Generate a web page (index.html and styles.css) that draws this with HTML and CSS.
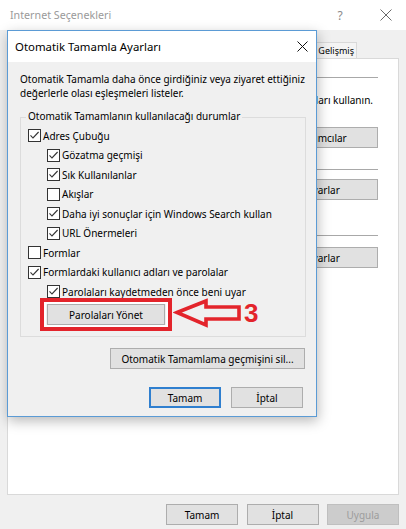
FILE: index.html
```html
<!DOCTYPE html>
<html lang="tr">
<head>
<meta charset="utf-8">
<title>Internet Seçenekleri</title>
<link rel="stylesheet" href="styles.css">
</head>
<body>
<div class="window">
  <div class="win-title">
    <span class="win-title-text">Internet Seçenekleri</span>
    <span class="win-help">?</span>
    <span class="win-close"><svg width="14" height="12" viewBox="0 0 14 12"><path d="M1.5 0.5 L12.5 11.5 M12.5 0.5 L1.5 11.5" stroke="#6a6a6a" stroke-width="1" fill="none"/></svg></span>
  </div>
  <div class="tabstrip">
    <div class="tab">Gelişmiş</div>
  </div>
  <div class="panel">
    <div class="pcol">
      <div class="sep"></div>
      <div class="ptext">sertifikaları kullanın.</div>
      <div class="pbtns r1">
        <button class="btn pbtn">Yayımcılar</button>
      </div>
      <div class="sep s2"></div>
      <div class="pbtns r2"><button class="btn pbtn">Ayarlar</button></div>
      <div class="sep s3"></div>
      <div class="pbtns r3"><button class="btn pbtn">Ayarlar</button></div>
    </div>
  </div>
  <div class="footer">
    <button class="btn fbtn">Tamam</button>
    <button class="btn fbtn">İptal</button>
    <button class="btn fbtn disabled">Uygula</button>
  </div>

  <div class="dialog">
    <div class="dlg-title">
      <span class="dlg-title-text">Otomatik Tamamla Ayarları</span>
      <span class="dlg-close"><svg width="11" height="11" viewBox="0 0 11 11"><path d="M0.5 0.5 L10.5 10.5 M10.5 0.5 L0.5 10.5" stroke="#111" stroke-width="1" fill="none"/></svg></span>
    </div>
    <div class="dlg-body">
      <p class="desc"><span class="dl">Otomatik Tamamla daha önce girdiğiniz veya ziyaret ettiğiniz</span><span class="dl">değerlerle olası eşleşmeleri listeler.</span></p>
      <fieldset class="group">
        <legend>Otomatik Tamamlanın kullanılacağı durumlar</legend>
        <div class="cb l1"><svg class="box" width="13" height="13" viewBox="0 0 13 13"><rect x="0.5" y="0.5" width="12" height="12" fill="#fff" stroke="#333"/><path d="M2.5 6.3 L5 9 L10.6 3" fill="none" stroke="#333" stroke-width="1.1"/></svg><span>Adres Çubuğu</span></div>
        <div class="cb l2"><svg class="box" width="13" height="13" viewBox="0 0 13 13"><rect x="0.5" y="0.5" width="12" height="12" fill="#fff" stroke="#333"/><path d="M2.5 6.3 L5 9 L10.6 3" fill="none" stroke="#333" stroke-width="1.1"/></svg><span>Gözatma geçmişi</span></div>
        <div class="cb l2"><svg class="box" width="13" height="13" viewBox="0 0 13 13"><rect x="0.5" y="0.5" width="12" height="12" fill="#fff" stroke="#333"/><path d="M2.5 6.3 L5 9 L10.6 3" fill="none" stroke="#333" stroke-width="1.1"/></svg><span>Sık Kullanılanlar</span></div>
        <div class="cb l2"><svg class="box" width="13" height="13" viewBox="0 0 13 13"><rect x="0.5" y="0.5" width="12" height="12" fill="#fff" stroke="#333"/></svg><span>Akışlar</span></div>
        <div class="cb l2"><svg class="box" width="13" height="13" viewBox="0 0 13 13"><rect x="0.5" y="0.5" width="12" height="12" fill="#fff" stroke="#333"/><path d="M2.5 6.3 L5 9 L10.6 3" fill="none" stroke="#333" stroke-width="1.1"/></svg><span>Daha iyi sonuçlar için Windows Search kullan</span></div>
        <div class="cb l2"><svg class="box" width="13" height="13" viewBox="0 0 13 13"><rect x="0.5" y="0.5" width="12" height="12" fill="#fff" stroke="#333"/><path d="M2.5 6.3 L5 9 L10.6 3" fill="none" stroke="#333" stroke-width="1.1"/></svg><span>URL Önermeleri</span></div>
        <div class="cb l1"><svg class="box" width="13" height="13" viewBox="0 0 13 13"><rect x="0.5" y="0.5" width="12" height="12" fill="#fff" stroke="#333"/></svg><span>Formlar</span></div>
        <div class="cb l1"><svg class="box" width="13" height="13" viewBox="0 0 13 13"><rect x="0.5" y="0.5" width="12" height="12" fill="#fff" stroke="#333"/><path d="M2.5 6.3 L5 9 L10.6 3" fill="none" stroke="#333" stroke-width="1.1"/></svg><span>Formlardaki kullanıcı adları ve parolalar</span></div>
        <div class="cb l2"><svg class="box" width="13" height="13" viewBox="0 0 13 13"><rect x="0.5" y="0.5" width="12" height="12" fill="#fff" stroke="#333"/><path d="M2.5 6.3 L5 9 L10.6 3" fill="none" stroke="#333" stroke-width="1.1"/></svg><span>Parolaları kaydetmeden önce beni uyar</span></div>
        <div class="pw-row">
          <div class="annot">
            <button class="btn pw">Parolaları Yönet</button>
            <span class="mark-rect"></span>
            <svg class="mark-arrow" width="72" height="32" viewBox="0 0 72 32"><path d="M4 15.5 L33 4 L33 10 L66 10 L66 22 L33 22 L33 28 Z" fill="none" stroke="#e3242b" stroke-width="3.6" stroke-linejoin="miter"/></svg>
            <span class="mark-num">3</span>
          </div>
        </div>
      </fieldset>
      <div class="clear-row"><button class="btn clear">Otomatik Tamamlama geçmişini sil...</button></div>
      <div class="dlg-actions">
        <button class="btn act default">Tamam</button>
        <button class="btn act">İptal</button>
      </div>
    </div>
  </div>
</div>
</body>
</html>
```

FILE: styles.css
```css
* { box-sizing: border-box; }
html, body { margin: 0; padding: 0; }
body {
  width: 406px;
  height: 529px;
  overflow: hidden;
  font-family: "Noto Sans", "Open Sans", sans-serif;
  font-size: 10px;
  color: #000;
  background: #f0f0f0;
}
.window {
  position: relative;
  width: 406px;
  height: 529px;
  display: flex;
  flex-direction: column;
  background: #f0f0f0;
}
.win-title {
  flex: none;
  height: 30px;
  background: #fff;
  display: flex;
  align-items: center;
  padding-left: 10px;
}
.win-title-text { flex: 1; font-size: 10.7px; color: #9a9a9a; }
.win-help { width: 52px; text-align: center; font-size: 12px; color: #8a8a8a; }
.win-close { width: 40px; display: flex; justify-content: center; }

.tabstrip {
  flex: none;
  height: 28px;
  display: flex;
  justify-content: flex-end;
  align-items: flex-end;
  padding-right: 49px;
}
.tab {
  height: 16px;
  padding: 0 2px;
  border: 1px solid #d9d9d9;
  border-bottom: none;
  background: #f4f4f4;
  font-size: 9px;
  line-height: 15px;
}
.panel {
  flex: none;
  height: 437px;
  margin: 0 7px;
  background: #fff;
  border: 1px solid #d9d9d9;
}
.pcol {
  padding: 18px 20px 0 12px;
  display: flex;
  flex-direction: column;
}
.sep { height: 0; border-top: 1px solid #a8a8a8; }
.sep.s2 { margin-top: 21px; }
.sep.s3 { margin-top: 35px; }
.ptext {
  margin-top: 15px;
  height: 14px;
  line-height: 14px;
  display: flex;
  justify-content: flex-end;
  padding-right: 5px;
  white-space: nowrap;
}
.pbtns { display: flex; justify-content: flex-end; gap: 9px; }
.pbtns.r1 { margin-top: 20px; }
.pbtns.r2 { margin-top: 9px; }
.pbtns.r3 { margin-top: 11px; }

.btn {
  height: 21px;
  padding: 0;
  margin: 0;
  border: 1px solid #adadad;
  background: #e1e1e1;
  font-family: inherit;
  font-size: 10px;
  color: #000;
  white-space: nowrap;
}
.pbtn { width: 110px; }

.footer {
  flex: none;
  height: 34px;
  display: flex;
  justify-content: flex-end;
  gap: 8.5px;
  padding: 9px 7px 0 0;
}
.fbtn { width: 72px; }
.fbtn.disabled { background: #cccccc; border-color: #bfbfbf; color: #9c9c9c; }

/* dialog overlay */
.dialog {
  position: absolute;
  left: 7px;
  top: 30px;
  width: 310px;
  height: 387px;
  border: 1px solid #5b9bd5;
  background: #f0f0f0;
  display: flex;
  flex-direction: column;
  box-shadow: 1px 4px 12px rgba(0, 0, 0, 0.28);
}
.dlg-title {
  flex: none;
  height: 31px;
  background: #fff;
  display: flex;
  align-items: center;
  padding-left: 7px;
  font-size: 11.4px;
}
.dlg-title-text { flex: 1; }
.dlg-close { width: 28px; display: flex; justify-content: center; }
.dlg-body {
  flex: 1;
  padding: 10px 10px 0 12px;
  display: flex;
  flex-direction: column;
}
.desc { margin: 0; display: flex; flex-direction: column; white-space: nowrap; }
.desc .dl { display: block; height: 14px; line-height: 14px; }
.group {
  margin: 10px 0 0;
  padding: 2px 6px 11px 5px;
  border: 1px solid #dcdcdc;
  min-width: 0;
}
.group legend {
  padding: 0 2px 2px;
  line-height: 12px;
  white-space: nowrap;
}
.cb {
  display: flex;
  align-items: center;
  gap: 2px;
  height: 19.5px;
  padding-left: 2px;
  white-space: nowrap;
}
.cb.l2 { padding-left: 21px; }
.cb .box { flex: none; }

.pw-row { margin-top: 2.5px; padding-left: 21px; display: flex; }
.annot { position: relative; }
.btn.pw { display: block; width: 118px; }
.mark-rect {
  position: absolute;
  left: -7px;
  top: -6px;
  width: 132px;
  height: 33px;
  border: 4px solid #e3242b;
  box-shadow: inset 0 0 0 2px #fff;
}
.mark-arrow { position: absolute; left: 126px; top: -7px; }
.mark-num {
  position: absolute;
  left: 197px;
  top: -4px;
  font-family: "Liberation Sans", Arial, sans-serif;
  font-weight: bold;
  font-size: 26px;
  line-height: 26px;
  color: #e3242b;
}

.clear-row { margin-top: 11px; display: flex; justify-content: flex-end; padding-right: 1px; }
.btn.clear { width: 195px; }
.dlg-actions { margin-top: 18px; display: flex; justify-content: flex-end; gap: 10px; padding-right: 3px; }
.btn.act { width: 72px; }
.btn.default { border: 2px solid #2f7fcf; }
```
